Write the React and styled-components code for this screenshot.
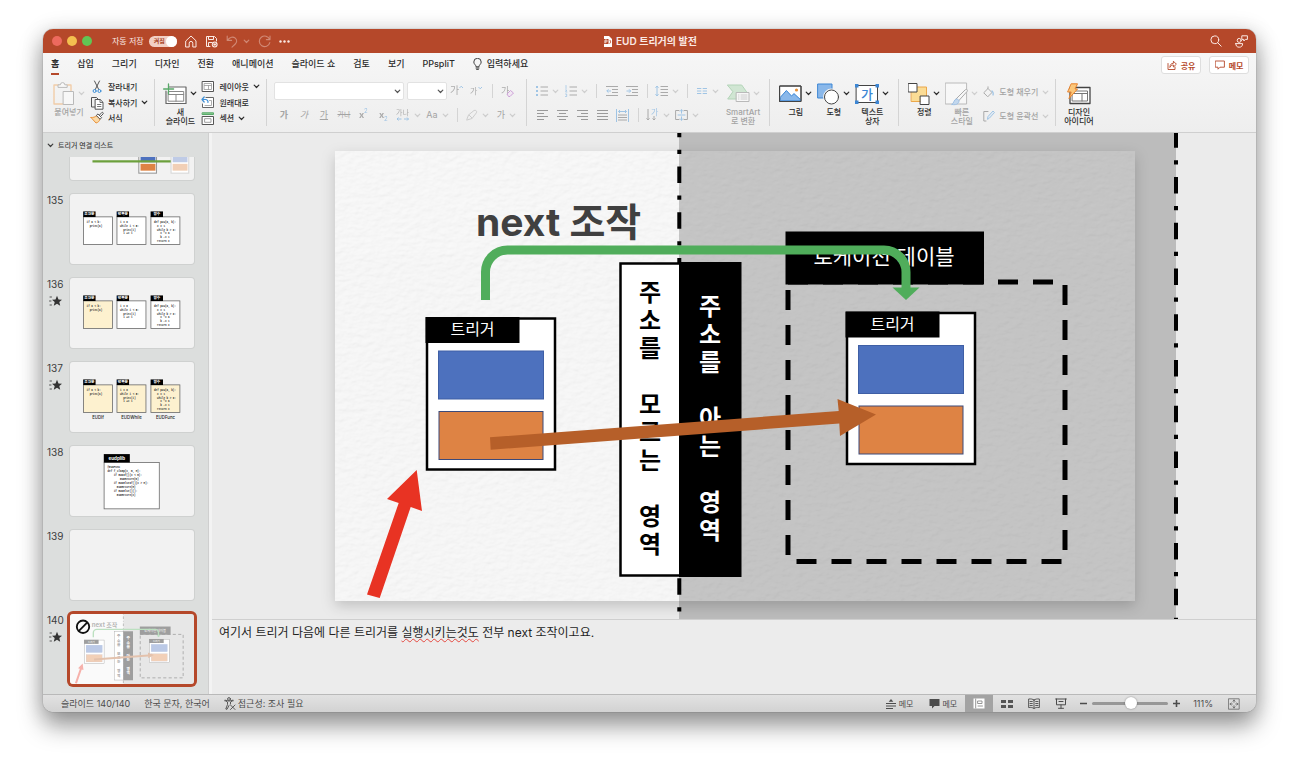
import React from "react";
import styled, { createGlobalStyle, css } from "styled-components";

const GlobalStyle = createGlobalStyle`
  * {
    box-sizing: border-box;
  }
  body {
    margin: 0;
    background: #fff;
    color: #2b2b2b;
    font-family: Inter, "Noto Sans CJK KR", sans-serif;
    font-size: 8px;
  }
  button, select, input {
    font: inherit;
    color: inherit;
    margin: 0;
  }
  svg {
    display: block;
    flex: none;
  }
`;

const Desktop = styled.div`
  height: 100vh;
  min-height: 600px;
  padding: 29px 43px 56px;
  overflow: hidden;
`;

const Window = styled.div`
  display: flex;
  flex-direction: column;
  height: 100%;
  border-radius: 10px;
  overflow: hidden;
  background: #ebebeb;
  box-shadow: 0 0 1px rgba(0, 0, 0, 0.6), 0 14px 24px rgba(0, 0, 0, 0.38),
    0 2px 22px rgba(0, 0, 0, 0.16);
`;

/* ---------- title bar ---------- */

const TitleBar = styled.header`
  flex: none;
  display: grid;
  grid-template-columns: 1fr auto 1fr;
  align-items: center;
  height: 24px;
  padding: 0 8px 0 9px;
  background: #b5482a;
  color: #fbeae5;
`;

const BarSide = styled.div`
  display: flex;
  align-items: center;
  gap: ${({ $gap }) => $gap}px;
  justify-content: ${({ $end }) => ($end ? "flex-end" : "flex-start")};
`;

const Lights = styled.div`
  display: flex;
  gap: 5px;
  margin-right: 12px;
`;

const Light = styled.button`
  width: 10px;
  height: 10px;
  padding: 0;
  border: 0;
  border-radius: 50%;
  background: ${({ $color }) => $color};
`;

const AutoSave = styled.label`
  display: flex;
  align-items: center;
  gap: 5px;
  line-height: 12px;

  input {
    position: absolute;
    opacity: 0;
  }
`;

const Track = styled.span`
  display: flex;
  align-items: center;
  justify-content: space-between;
  width: 28px;
  height: 11px;
  padding-left: 5px;
  border-radius: 6px;
  background: #f2d0c5;
  color: #a94427;
  font-size: 6px;
  font-weight: 700;

  &::after {
    content: "";
    width: 11px;
    height: 11px;
    border-radius: 50%;
    background: #fff;
  }
`;

const BarButton = styled.button`
  display: flex;
  align-items: center;
  gap: 5px;
  padding: 0;
  border: 0;
  background: none;
  opacity: ${({ disabled }) => (disabled ? 0.4 : 1)};
`;

const DocTitle = styled.h1`
  display: flex;
  align-items: center;
  gap: 4px;
  margin: 0;
  font-size: 10px;
  font-weight: 600;
  line-height: 12px;
`;

/* ---------- tabs ---------- */

const Head = styled.div`
  flex: none;
  background: linear-gradient(#f6f6f6, #eeeeee);
  border-bottom: 1px solid #cfcfcf;
`;

const TabRow = styled.div`
  display: flex;
  align-items: center;
  height: 24px;
  padding: 0 7px 0 8px;
`;

const Tabs = styled.nav`
  flex: 1;
  display: flex;
  gap: 18px;
  font-size: 9px;
  line-height: 14px;
`;

const Tab = styled.button`
  display: flex;
  align-items: center;
  gap: 5px;
  height: 20px;
  padding: 0;
  border: 0;
  border-bottom: 2px solid ${({ $active }) => ($active ? "#b5482a" : "transparent")};
  background: none;
  font-weight: ${({ $active }) => ($active ? 700 : 500)};
  white-space: nowrap;
`;

const Actions = styled.div`
  display: flex;
  gap: 8px;
`;

const ActionButton = styled.button`
  display: flex;
  align-items: center;
  justify-content: center;
  gap: 4px;
  width: 40px;
  height: 18px;
  padding: 0;
  border: 1px solid #dedede;
  border-radius: 3px;
  background: #fff;
  color: #b5482a;
  font-weight: 700;
`;

/* ---------- ribbon ---------- */

const Ribbon = styled.div`
  display: flex;
  height: 55px;
  padding: 2px 0 6px;
`;

const Group = styled.div`
  flex: none;
  display: flex;
  gap: ${({ $gap }) => $gap || 5}px;
  padding: 0 ${({ $right }) => $right}px 0 ${({ $left }) => $left}px;

  &:not(:last-child) {
    border-right: 1px solid #d4d4d4;
  }
`;

const disabledTool = css`
  &:disabled {
    color: #a3a3a3;
  }
  &:disabled svg {
    opacity: 0.45;
  }
`;

const BigTool = styled.button`
  display: flex;
  flex-direction: column;
  align-items: center;
  gap: 2px;
  padding: 2px 0 0;
  border: 0;
  background: none;
  line-height: 9px;
  white-space: pre-line;
  font-weight: 500;
  ${disabledTool}
`;

const BigIcon = styled.span`
  display: flex;
  align-items: center;
  gap: 3px;
  height: 25px;
`;

const SmallTool = styled.button`
  display: flex;
  align-items: center;
  gap: 4px;
  height: 16px;
  padding: 0;
  border: 0;
  background: none;
  line-height: 12px;
  font-weight: 500;
  ${disabledTool}
`;

const Stack = styled.div`
  display: flex;
  flex-direction: column;
  gap: ${({ $gap }) => $gap || 0}px;
  padding-top: ${({ $top }) => $top || 0}px;
`;

const ToolRow = styled.div`
  display: flex;
  align-items: center;
  height: 18px;
`;

const Tool = styled.button`
  display: flex;
  align-items: center;
  justify-content: center;
  gap: 4px;
  width: ${({ $drop }) => ($drop ? 29 : 20)}px;
  height: 18px;
  padding: 0;
  border: 0;
  background: none;
  font-size: 9px;
  line-height: 12px;
  white-space: nowrap;
  ${disabledTool}

  s {
    font-size: 7px;
  }
`;

const Rule = styled.span`
  width: 1px;
  height: 14px;
  margin: 0 5px;
  background: #d4d4d4;
`;

const SelectBox = styled.label`
  position: relative;
  width: ${({ $w }) => $w}px;
  height: 18px;
  margin-right: ${({ $after }) => $after}px;
  color: #555;

  select {
    width: 100%;
    height: 100%;
    appearance: none;
    border: 1px solid #e2e2e2;
    border-radius: 2px;
    background: #fff;
  }
  svg {
    position: absolute;
    right: 3px;
    top: 7px;
    pointer-events: none;
  }
`;

/* ---------- body ---------- */

const Main = styled.div`
  flex: 1;
  min-height: 0;
  display: flex;
`;

const Side = styled.aside`
  flex: none;
  display: flex;
  flex-direction: column;
  width: 169px;
  background: #dcdedd;
  border-right: 3px solid #f3f3f3;
  box-shadow: inset -1px 0 #cfcfcf;
`;

const SectionHead = styled.button`
  flex: none;
  display: flex;
  align-items: center;
  gap: 4px;
  height: 24px;
  padding: 0 4px;
  border: 0;
  background: none;
  color: #3d3d3d;
  font-size: 7px;
  font-weight: 500;
`;

const SlideList = styled.ol`
  flex: 1;
  min-height: 0;
  display: flex;
  flex-direction: column;
  justify-content: flex-end;
  gap: 14px;
  margin: 0;
  padding: 0 0 10px 4px;
  overflow: hidden;
  list-style: none;
`;

const SlideItem = styled.li`
  flex: none;
  display: grid;
  grid-template-columns: 23px 124px;
  height: 70px;
`;

const SlideNo = styled.div`
  font-size: 10px;
  line-height: 12px;
  color: #3d3d3d;

  svg {
    margin: 5px 0 0 2px;
  }
`;

const Thumb = styled.button`
  display: block;
  height: 70px;
  padding: 0;
  border: 0;
  border-radius: 3px;
  overflow: hidden;
  background: #f2f2f2;
  box-shadow: ${({ $active }) => ($active ? "0 0 0 3px #b5482a" : "0 0 0 1px #cfd1d0")};

  > svg {
    width: 100%;
    height: 100%;
  }
`;

const Work = styled.main`
  flex: 1;
  min-width: 0;
  display: flex;
  flex-direction: column;
`;

const Stage = styled.section`
  flex: 1;
  min-height: 0;
  display: flex;
  align-items: center;
  justify-content: center;
  padding-left: 2px;
  overflow: hidden;

  > svg {
    overflow: visible;
  }
`;

const Notes = styled.div`
  flex: none;
  height: 75px;
  padding: 4px 7px;
  border-top: 1px solid #cfcfcf;
  background: #ececec;
  color: #1f1f1f;
  font-size: 12px;
  line-height: 18px;
  outline: none;
`;

const Misspelled = styled.span`
  text-decoration: underline wavy #e5483f 1px;
  text-underline-offset: 1px;
`;

/* ---------- status bar ---------- */

const StatusBar = styled.footer`
  flex: none;
  display: flex;
  justify-content: space-between;
  height: 18px;
  border-top: 1px solid #b9b9b9;
  background: linear-gradient(#e2e2e2, #d2d2d2);
  color: #4c4c4c;
`;

const StatusPart = styled.div`
  display: flex;
  align-items: center;
  gap: ${({ $gap }) => $gap || 0}px;
  padding: 0 ${({ $right }) => $right || 0}px 0 ${({ $left }) => $left || 0}px;
`;

const StatusButton = styled.button`
  display: flex;
  align-items: center;
  justify-content: center;
  gap: 2px;
  min-width: ${({ $w }) => $w || 0}px;
  height: 17px;
  padding: 0;
  border: 0;
  background: ${({ $active }) => ($active ? "#a3a3a3" : "none")};
  line-height: 12px;
  font-size: ${({ $large }) => ($large ? 9 : 8)}px;
  white-space: nowrap;
`;

const Zoom = styled.input`
  width: 76px;
  height: 13px;
  appearance: none;
  background: none;

  &::-webkit-slider-runnable-track {
    height: 3px;
    border-radius: 2px;
    background: #979797;
  }
  &::-webkit-slider-thumb {
    appearance: none;
    width: 12px;
    height: 12px;
    margin-top: -5px;
    border-radius: 50%;
    background: #fff;
    box-shadow: 0 0 2px rgba(0, 0, 0, 0.4);
  }
`;

/* ---------- icons ---------- */

const Icon = ({ w = 14, h = 14, children, ...rest }) => (
  <svg
    width={w}
    height={h}
    viewBox={`0 0 ${w} ${h}`}
    fill="none"
    stroke="currentColor"
    strokeLinecap="round"
    strokeLinejoin="round"
    aria-hidden="true"
    {...rest}
  >
    {children}
  </svg>
);

const Chevron = () => (
  <Icon w={7} h={5} strokeWidth="1.2">
    <path d="M1.2 1.2 3.5 3.5 5.8 1.2" />
  </Icon>
);

const HomeIcon = () => (
  <Icon w={12} h={13}>
    <path d="M1 5.8 6 1l5 4.800V12H7.800V8.200a1.800 1.800 0 0 0-3.600 0V12H1z" />
  </Icon>
);

const SaveIcon = () => (
  <Icon w={13} h={13}>
    <path d="M5 11.5H1.5v-10h8l2 2V6M3.500 1.500v3h5v-3M3.500 11.500v-4H7" />
    <circle cx="9.7" cy="9.5" r="2.9" fill="#fbeae5" stroke="none" />
    <path d="M8.200 9.200a1.600 1.600 0 0 1 2.800-.5M11.200 9.900a1.600 1.600 0 0 1-2.800.5" stroke="#b5482a" strokeWidth=".8" />
  </Icon>
);

const UndoIcon = () => (
  <Icon w={12} h={13} strokeWidth="1.1">
    <path d="M1.200 1v4.400h4.400M1.400 5.200C4 2 7 1.200 9.300 3.200c2 2 1.600 4.200 0 5.800L6 12.200" />
  </Icon>
);

const RedoIcon = () => (
  <Icon w={13} h={13} strokeWidth="1.1">
    <path d="M12 1v3.600H8.400M11.600 4.400A5.300 5.300 0 1 0 11.800 7.600" />
  </Icon>
);

const DotsIcon = () => (
  <Icon w={11} h={3}>
    <g fill="currentColor" stroke="none">
      <circle cx="1.5" cy="1.5" r="1.2" />
      <circle cx="5.5" cy="1.5" r="1.2" />
      <circle cx="9.5" cy="1.5" r="1.2" />
    </g>
  </Icon>
);

const FileIcon = () => (
  <Icon w={9} h={11}>
    <path d="M1 0h5l3 3v8H1z" fill="#fff" stroke="none" />
    <path d="M0 3h5.500v5H0z" fill="#b5482a" stroke="none" />
    <path d="M2 7V4h1.200a1 1 0 0 1 0 2H2" stroke="#fff" strokeWidth=".8" />
    <path d="M7 4.200a2 2 0 0 1 0 3.200" stroke="#b5482a" strokeWidth=".9" />
  </Icon>
);

const SearchIcon = () => (
  <Icon w={12} h={12}>
    <circle cx="4.800" cy="4.800" r="3.900" />
    <path d="m7.700 7.700 3.500 3.500" />
  </Icon>
);

const PeopleIcon = () => (
  <Icon w={13} h={13}>
    <circle cx="4.200" cy="5.400" r="2" />
    <path d="M.8 8.600h6.800c0 2.400-1.200 3.600-3.400 3.600S.8 11 .8 8.600ZM7.200.8h5.200v3.600h-2L8.800 6V4.400H7.200z" />
  </Icon>
);

const BulbIcon = () => (
  <Icon w={9} h={12} strokeWidth=".9">
    <path d="M3 8.400C3 6.800.8 6.200.8 4a3.700 3.700 0 0 1 7.400 0c0 2.200-2.200 2.800-2.200 4.400zM3 10h3M3.600 11.400h1.800" />
  </Icon>
);

const ShareIcon = () => (
  <Icon w={10} h={10} strokeWidth=".9">
    <path d="M1 3.500v6h7V7M3 7c0-2.600 1.200-3.600 3.400-3.700V1.200l3 3-3 2.800V5C5 5 4 5.600 3 7Z" />
  </Icon>
);

const CommentIcon = () => (
  <Icon w={10} h={10} strokeWidth=".9">
    <path d="M.6 1h8.800v6.200H5L3 9.200v-2H.6z" />
  </Icon>
);

const PasteIcon = () => (
  <Icon w={22} h={24}>
    <path d="M6 3H1v19h9M14 3h4v6" stroke="#f0a050" strokeWidth="1.400" />
    <path d="M5 5V2.800h2.400a2.200 2.200 0 0 1 4.400 0h2.400V5z" fill="#fff" stroke="#777" />
    <path d="M10.500 9.500h10v13h-10z" fill="#fff" stroke="#777" />
  </Icon>
);

const CutIcon = () => (
  <Icon>
    <path d="M4.500 1 8.800 9.600M9.500 1 5.200 9.600" stroke="#555" />
    <circle cx="4.600" cy="11" r="1.500" stroke="#3f8fd6" />
    <circle cx="9.400" cy="11" r="1.500" stroke="#3f8fd6" />
  </Icon>
);

const CopyIcon = () => (
  <Icon stroke="#555">
    <path d="M5 11H1.500V1.500h5L8 3" />
    <path d="M5.500 3.500h4.700L13 6.300v6.900H5.500z" fill="#fff" />
    <path d="M10 3.800v2.700h2.700M7.500 8.500h3.400M7.500 10.500h3.400" strokeWidth=".8" />
  </Icon>
);

const BrushIcon = () => (
  <Icon>
    <path d="m1 6.500 5 5.500c2-.4 3.600-2 4-4L7 4.600C5 6 3.500 6.600 1 6.500Z" fill="#fbd9a6" stroke="#e8923a" />
    <path d="M6.600 4.200 8 2.900l3.600 3.800L10.300 8zM9.600 4l2.200-2.500c.8-.6 2 .5 1.300 1.400l-2.300 2.300" fill="#fff" stroke="#555" />
  </Icon>
);

const NewSlideIcon = () => (
  <Icon w={24} h={22}>
    <path d="M6 4h17v16.500H3V8" fill="#fff" stroke="#666" strokeWidth="1.200" />
    <path d="M5.500 8.500h15.200v9.700H5.500zM5.500 11.500h15.200M13 11.500v6.700" stroke="#888" />
    <path d="M5.500 1v10M.6 6h10" stroke="#58a968" strokeWidth="1.300" />
  </Icon>
);

const LayoutIcon = () => (
  <Icon h={13}>
    <path d="M1.500 1.500h11v10h-11z" stroke="#555" fill="#fff" />
    <path d="M3.500 3.500h7v6h-7zM3.500 5.500h7M7.500 5.500v4" stroke="#999" strokeWidth=".8" />
  </Icon>
);

const ResetIcon = () => (
  <Icon h={13}>
    <path d="M5 1.500h7.500v10h-11V8" stroke="#666" fill="#fff" />
    <path d="M4 9.500h6.500v-5h-2" stroke="#999" strokeWidth=".8" />
    <path d="M3.200 1 1 3.500 3.200 6M1 3.500h3.500a2.500 2.500 0 0 1 2.500 3" stroke="#3f8fd6" strokeWidth="1.200" />
  </Icon>
);

const SectionIcon = () => (
  <Icon h={13}>
    <path d="M1.500.8h11v1.700h-11z" fill="#8ccf95" stroke="#58a968" />
    <path d="M1.500 4.500h11v8h-11z" fill="#fff" stroke="#555" />
    <path d="M4 6.700h6v3.600H4z" stroke="#888" strokeWidth=".8" />
  </Icon>
);

// A glyph with a small mark beside or under it
const GlyphIcon = ({ text, w = 14, size = 9, children, ...rest }) => (
  <svg width={w} height="14" viewBox={`0 0 ${w} 14`} aria-hidden="true" fill="none">
    <text x="0" y="10" fontSize={size} fill="#555" {...rest}>
      {text}
    </text>
    {children}
  </svg>
);

const EraserGlyph = () => (
  <GlyphIcon text="가">
    <path d="m6 10 3.500-3.500 3 2.500L9 12.500H7.500z" fill="#f0dcf2" stroke="#a040b8" />
  </GlyphIcon>
);

const PenIcon = () => (
  <Icon w={12} h={12}>
    <path d="m1 10 1.500-4L8 1.500c1.500-1 3.400.8 2.400 2.300L6 9.500 1 11zM3 6l3 3" />
  </Icon>
);

const ListIcon = ({ numbered }) => (
  <Icon w={12} h={12}>
    <path d="M4.500 2H12M4.500 6H12M4.500 10H12" strokeLinecap="butt" stroke="#555" />
    {numbered ? (
      <path d="M1 .5v3M.5 5h1.300L.6 7h1.300M.5 9h1.200v2.500H.5" stroke="#3f8fd6" strokeWidth=".8" />
    ) : (
      <path d="M0 1h2v2H0zM0 5h2v2H0zM0 9h2v2H0z" fill="#3f8fd6" stroke="none" />
    )}
  </Icon>
);

const IndentIcon = ({ out }) => (
  <Icon w={12} h={12} strokeLinecap="butt" stroke="#555">
    <path d="M0 1.500h12M6 4.500h6M6 7.500h6M0 10.500h12" />
    <path d={out ? "M5 6H.8M2.500 4.300.8 6l1.700 1.700" : "M.5 6h4.200M3 4.300 4.700 6 3 7.700"} stroke="#3f8fd6" />
  </Icon>
);

const SpacingIcon = () => (
  <Icon w={13} h={12} strokeLinecap="butt" stroke="#555">
    <path d="M5.500 1.500H13M5.500 4.500H13M5.500 7.500H13M5.500 10.500H13" />
    <path d="M2 1v10M.5 2.800 2 1l1.500 1.800M.5 9.200 2 11l1.500-1.800" stroke="#3f8fd6" />
  </Icon>
);

const ColumnsIcon = () => (
  <Icon w={12} h={12} strokeLinecap="butt" stroke="#3f8fd6">
    <path d="M1 3.500h4.300M6.700 3.500H11M1 6h4.300M6.700 6H11M1 8.500h4.300M6.700 8.500H11" />
  </Icon>
);

const alignPaths = {
  left: "M0 1.5h11M0 4.500h7M0 7.500h11M0 10.500h7",
  center: "M0 1.5h11M2 4.500h7M0 7.500h11M2 10.500h7",
  right: "M0 1.5h11M4 4.500h7M0 7.500h11M4 10.500h7",
  justify: "M0 1.5h11M0 4.500h11M0 7.500h11M0 10.500h11",
};

const AlignIcon = ({ kind }) => (
  <Icon w={11} h={12} strokeLinecap="butt" stroke="#333">
    <path d={alignPaths[kind]} />
  </Icon>
);

const DistributeIcon = () => (
  <Icon w={13} h={13} strokeLinecap="butt" stroke="#555">
    <path d="M2 6h9M2 8.500h9M2 11h9" />
    <path d="M.5 0v13M12.500 0v13M2.500 2.500h8M4 1 2.500 2.500 4 4M9 1l1.500 1.500L9 4" stroke="#3f8fd6" />
  </Icon>
);

const DirectionIcon = () => (
  <GlyphIcon text="가" size={8} w={13} x="5" y="7" style={{ fill: "#3f8fd6" }}>
    <path d="M2 1v11M.5 10.300 2 12l1.500-1.700M8 8v4M6.500 10.500 8 12l1.500-1.500" stroke="#555" />
  </GlyphIcon>
);

const AnchorIcon = () => (
  <Icon w={13} h={12}>
    <path d="M4 1.500H.6v9H4M9 1.500h3.400v9H9" stroke="#555" />
    <path d="M3 6h7M6.500.8v3.400M5.200 2.200 6.500.8l1.300 1.400M6.500 11.200V7.800M5.200 9.800l1.300 1.400 1.300-1.400" stroke="#3f8fd6" />
  </Icon>
);

const SmartArtIcon = () => (
  <Icon w={23} h={19}>
    <path d="M.7 1h14l5 7-5 7h-14l5-7z" fill="#a9d8ae" stroke="#68b073" />
    <path d="M9.500 8.500h12.500v9H9.500z" fill="#fff" stroke="#777" />
    <path d="M11.500 11h.5M11.500 13h.5M11.500 15h.5M14 11h6M14 13h6M14 15h6" stroke="#888" strokeWidth=".8" />
  </Icon>
);

const PictureIcon = () => (
  <Icon w={23} h={18}>
    <path d="M1 1h21v15.500H1z" fill="#fff" />
    <path d="m1.600 12 5.800-6.500 5.100 5.500 2.500-2.400 6.400 5.900v1.400H1.600z" fill="#8ab8ea" stroke="#3c86d4" />
    <circle cx="17.500" cy="5" r="1.600" fill="#e8923a" stroke="none" />
    <path d="M1 1h21v15.500H1z" stroke="#444" />
  </Icon>
);

const ShapesIcon = () => (
  <Icon w={23} h={22}>
    <path d="M1 1h14v14H1z" fill="#8ab8ea" stroke="#3c86d4" />
    <circle cx="14.500" cy="14" r="8.400" stroke="none" fill="#f3f3f3" />
    <circle cx="14.500" cy="14" r="7" fill="#fff" stroke="#444" />
  </Icon>
);

const TextBoxIcon = () => (
  <Icon w={24} h={20}>
    <path d="M1.500 1.500h21v17h-21z" fill="#fff" stroke="#444" />
    <text x="12" y="15" textAnchor="middle" fontSize="13" fontWeight="500" fill="#3c86d4" stroke="none">
      가
    </text>
    <path d="M0 0h3.500v3.500H0zM20.500 0H24v3.500h-3.500zM0 16.500h3.500V20H0zM20.500 16.500H24V20h-3.500z" fill="#3c86d4" stroke="none" />
  </Icon>
);

const ArrangeIcon = () => (
  <Icon w={22} h={22}>
    <path d="M3.500 4h15v14.500h-15z" fill="#fbdc95" stroke="#eba74a" />
    <path d="M.5.5h8.500V9H.5zM12.500 13H21v8.500h-8.500z" fill="#fff" stroke="#444" />
  </Icon>
);

const QuickStyleIcon = () => (
  <Icon w={23} h={24}>
    <path d="M.6 1h21v21H.6z" fill="#fff" stroke="#777" />
    <path d="m11 17 9-9c2-1.500 3 .2 2 1.500l-8.500 9.500z" fill="#fff" stroke="#555" />
    <path d="M7 22.500c2-.5 1.500-5 4.500-5.500 2.600 0 3.200 2.600 1.600 4.300-1.500 1.500-4 1.700-6.100 1.200Z" fill="#8ab8ea" stroke="#3c86d4" />
  </Icon>
);

const FillIcon = () => (
  <Icon w={12} h={12}>
    <path d="m1 6.500 4-4 4 4-4 4zM5 2.500V.8" stroke="#555" />
    <path d="M9 5c1.500 1.500 1.500 2.500 1 4" stroke="#3f8fd6" strokeWidth="1.300" />
  </Icon>
);

const OutlineIcon = () => (
  <Icon w={12} h={12}>
    <path d="M5 1.500H.8V11H3" stroke="#555" />
    <path d="m4.500 9 .5-2.500L10 1l1.500 1.500-5 5.500z" fill="#d3e6f8" stroke="#3f8fd6" />
  </Icon>
);

const DesignIcon = () => (
  <Icon w={24} h={22}>
    <path d="M3 4.500h20v16H3z" fill="#fff" stroke="#444" strokeWidth="1.300" />
    <path d="M5.500 8h15v10h-15zM5.500 10.500h15M15 10.500V18" stroke="#777" />
    <path d="M4.500.8h6L8 6h2.500L2 15.500 4.200 9H1z" fill="#fbc77a" stroke="#e8812a" />
  </Icon>
);

const StarIcon = () => (
  <Icon w={13} h={12}>
    <path d="M8 .8 9.500 4.400l3.500.3-2.700 2.400.9 3.700L8 8.800l-3.200 2 .9-3.700L3 4.700l3.500-.3z" fill="#333" stroke="none" />
    <path d="M1 2h1.500M.5 6H2M1 10h1.500" stroke="#555" />
  </Icon>
);

const AccessIcon = () => (
  <Icon w={12} h={13} strokeWidth=".9">
    <circle cx="5" cy="2" r="1.400" />
    <path d="M.8 3.500 3.500 5v2.500L1.800 12 3 12.300 5 8.500M9.200 3.500 6.500 5v2M.8 3.500c.5-.8 1 0 4.200.6 3-.6 3.700-1.400 4.200-.6M6.500 8l4.500 4.500M11 8l-4.500 4.500" />
  </Icon>
);

const NotesIcon = () => (
  <Icon w={12} h={12} strokeLinecap="butt">
    <path d="M1 5.500h10M1 8h10M1 10.500h7" />
    <path d="m6 1 2.300 2.800H3.700z" fill="currentColor" stroke="none" />
  </Icon>
);

const BubbleIcon = () => (
  <Icon w={11} h={11}>
    <path d="M.5 1h10v7H5.500L3 10.500V8H.5z" fill="currentColor" stroke="none" />
  </Icon>
);

const NormalViewIcon = () => (
  <Icon w={12} h={11} stroke="#fff">
    <path d="M.5.5h11v10H.5z" fill="#fff" stroke="none" />
    <path d="M2.700 1v9M5 3h4v2.500H5zM5 8h4.500" stroke="#8a8a8a" strokeWidth=".9" />
  </Icon>
);

const SorterIcon = () => (
  <Icon w={12} h={10}>
    <path d="M0 1h5v3H0zM7 1h5v3H7zM0 6h5v3H0zM7 6h5v3H7z" fill="#555" stroke="none" />
  </Icon>
);

const ReadingIcon = () => (
  <Icon w={12} h={11} strokeWidth=".9">
    <path d="M6 2C4.500 1 3 .8.6 1v8.500c2.400-.2 4 0 5.400 1 1.400-1 3-1.200 5.400-1V1C9 .8 7.500 1 6 2Zm0 0v8.500M2 3.500h2.300M2 5.500h2.300M2 7.500h2.300M7.700 3.500H10M7.700 5.500H10M7.700 7.500H10" />
  </Icon>
);

const ShowIcon = () => (
  <Icon w={12} h={11}>
    <path d="M.6 1h10.800M1.500 1v5.800h9V1M4 3.500h4M6 7v3M3.500 10.300h5" />
  </Icon>
);

const FitIcon = () => (
  <Icon w={12} h={12} strokeWidth=".8" stroke="#666">
    <path d="M.8.8h10.400v10.400H.8zM6 2v2.300M5 3.200 6 2l1 1.200M6 10V7.700M5 8.800 6 10l1-1.200M2 6h2.300M3.200 5 2 6l1.200 1M10 6H7.700M8.800 5 10 6 8.800 7" />
  </Icon>
);

const MinusIcon = () => (
  <Icon w={7} h={7} strokeWidth="1.600" strokeLinecap="butt">
    <path d="M0 3.500h7" />
  </Icon>
);

const PlusIcon = () => (
  <Icon w={7} h={7} strokeWidth="1.600" strokeLinecap="butt">
    <path d="M0 3.500h7M3.500 0v7" />
  </Icon>
);

/* ---------- slide drawings (800 x 450 units) ---------- */

const Paper = () => (
  <>
    <rect width="800" height="450" fill="#f7f7f7" />
    <rect width="800" height="450" filter="url(#paper)" opacity="0.24" />
  </>
);

const PaperFilter = () => (
  <defs>
    <filter id="paper" x="0" y="0" width="100%" height="100%">
      <feTurbulence type="fractalNoise" baseFrequency="0.12 0.2" numOctaves="4" seed="4" />
      <feDiffuseLighting lightingColor="#fff" surfaceScale="0.9">
        <feDistantLight azimuth="60" elevation="62" />
      </feDiffuseLighting>
    </filter>
    <filter id="slideShadow" x="-10%" y="-10%" width="120%" height="125%">
      <feDropShadow dx="0" dy="5" stdDeviation="7" floodOpacity="0.18" />
    </filter>
  </defs>
);

const TriggerCard = ({ x, y }) => (
  <g transform={`translate(${x} ${y})`}>
    <rect x="1.500" y="1.500" width="128" height="151" fill="#fff" stroke="#000" strokeWidth="2.500" />
    <rect width="94" height="26" />
    <text x="47" y="18" textAnchor="middle" fontSize="16" fill="#fff">
      트리거
    </text>
    <rect x="13" y="34" width="105" height="48" fill="#4d71be" stroke="#3f5fa5" />
    <rect x="13.500" y="94.500" width="104" height="48" fill="#de8344" stroke="#3c4a7a" />
  </g>
);

const VerticalText = ({ x, y, text, fill }) => (
  <text textAnchor="middle" fontSize="24" fontWeight="700" fill={fill}>
    {[...text].map((ch, i) =>
      ch === " " ? null : (
        <tspan key={i} x={x} y={y + i * 28}>
          {ch}
        </tspan>
      )
    )}
  </text>
);

const NextSlide = () => (
  <>
    <rect x="344" y="-18" width="497" height="486" fillOpacity="0.2" />
    <g stroke="#000" strokeWidth="4" strokeDasharray="16.5 12.5 4.25 12.5">
      <path d="M344.300-30.300V461" />
      <path d="M841-19.700V468" />
    </g>
    <rect x="453" y="131" width="277" height="279.500" fill="none" stroke="#000" strokeWidth="5" strokeDasharray="20 15" />
    <text x="141" y="85" fontSize="39" fontWeight="700" fill="#404040">
      next 조작
    </text>
    <rect x="450.500" y="80.500" width="198.500" height="53" />
    <text x="549" y="113" textAnchor="middle" fontSize="21" fill="#fff">
      로케이션 테이블
    </text>
    <rect x="285.500" y="112.500" width="60" height="312" fill="#fff" stroke="#000" strokeWidth="2.500" />
    <rect x="344" y="111" width="62.500" height="315" />
    <VerticalText x={315} y={150} text="주소를 모르는 영역" fill="#000" />
    <VerticalText x={375} y={164} text="주소를 아는 영역" fill="#fff" />
    <TriggerCard x={90.5} y={166} />
    <TriggerCard x={510.5} y={160.5} />
    <path d="M150.500 149V121a22 22 0 0 1 22-22H549a22 22 0 0 1 22 22v17" fill="none" stroke="#50ad5b" strokeWidth="9" />
    <path d="M557.500 136.500h27L571 149z" fill="#50ad5b" />
    <path d="m155 286.300 348.700-26.300-1.200-12L541 263.500 505 285l-.7-12.500L155.700 298.700z" fill="#b65f29" />
    <path d="m81.700 319 5.300 41-11.300-4L44.700 447 32 443.500 63.700 352 52 348z" fill="#e83323" />
  </>
);

const codeCards = [
  { x: 87, title: "조건문", name: "EUDIf", code: ["if a < b:", "  print(a)"] },
  { x: 303, title: "반복문", name: "EUDWhile", code: ["i = 0", "while i < 5:", "  print(i)", "  i += 1"] },
  {
    x: 522,
    title: "함수",
    name: "EUDFunc",
    code: ["def pow(a, b):", "  x = 1", "  while b > 0:", "    x *= a", "    b -= 1", "  return x"],
  },
];

const clampCode = [
  "@EUDFunc",
  "def f_clamp(x, m, M):",
  "    if EUDIf()(x < m):",
  "        EUDReturn(m)",
  "    if EUDElseIf()(x > M):",
  "      EUDReturn(M)",
  "    if EUDElse()():",
  "      EUDReturn(x)",
];

const CodeLines = ({ x, y, lines }) => (
  <text fontSize="17" fontWeight="700" fontFamily="Liberation Mono, monospace" fill="#333">
    {lines.map((line, i) => (
      <tspan key={i} x={x + (line.length - line.trimStart().length) * 10} y={y + i * 25}>
        {line.trimStart()}
      </tspan>
    ))}
  </text>
);

const CodeSlide = ({ filled, named }) => (
  <>
    {codeCards.map((card, i) => (
      <g key={card.title}>
        <rect x={card.x} y="147" width="187" height="177" fill={i < filled ? "#fdf1cf" : "#fff"} stroke="#666" strokeWidth="5" />
        <rect x={card.x - 2} y="112" width="80" height="36" />
        <text x={card.x + 38} y="138" textAnchor="middle" fontSize="24" fontWeight="700" fill="#fff">
          {card.title}
        </text>
        <CodeLines x={card.x + 20} y={185} lines={card.code} />
        {named && (
          <text x={card.x + 94} y="368" textAnchor="middle" fontSize="28" fontWeight="500" fill="#222">
            {card.name}
          </text>
        )}
      </g>
    ))}
  </>
);

const ClampSlide = () => (
  <>
    <rect x="220" y="106" width="356" height="298" fill="#fff" stroke="#666" strokeWidth="5" />
    <rect x="218" y="52" width="168" height="54" />
    <text x="302" y="88" textAnchor="middle" fontSize="29" fontWeight="700" fill="#fff">
      eudplib
    </text>
    <CodeLines x={242} y={144} lines={clampCode} />
  </>
);

const LinkSlide = () => (
  <>
    <rect x="444" y="250" width="114" height="156" fill="#fff" stroke="#999" strokeWidth="7" />
    <rect x="455" y="290" width="96" height="46" fill="#4d71be" />
    <rect x="455" y="346" width="96" height="44" fill="#de8344" />
    <rect x="652" y="250" width="114" height="156" fill="#fff" stroke="#d8d8d8" strokeWidth="7" />
    <rect x="662" y="290" width="96" height="46" fill="#bfcbe6" />
    <rect x="662" y="346" width="96" height="44" fill="#f1cfb6" />
    <path d="M145 330h505" stroke="#6ca03c" strokeWidth="15" />
  </>
);

const HiddenMark = () => (
  <g fill="none" stroke="#111" strokeWidth="12">
    <circle cx="84" cy="82" r="40" />
    <path d="m56 110 56-56" />
  </g>
);

// The first entry is scrolled past its number, so it carries no label
const slides = [
  { no: 134, scrolled: true, art: <LinkSlide /> },
  { no: 135, art: <CodeSlide filled={0} /> },
  { no: 136, art: <CodeSlide filled={1} />, animated: true },
  { no: 137, art: <CodeSlide filled={3} named />, animated: true },
  { no: 138, art: <ClampSlide /> },
  { no: 139, art: null },
  {
    no: 140,
    animated: true,
    active: true,
    art: (
      <>
        <NextSlide />
        <rect width="800" height="450" fill="#fff" opacity="0.62" />
        <HiddenMark />
      </>
    ),
  },
];

const tabs = ["홈", "삽입", "그리기", "디자인", "전환", "애니메이션", "슬라이드 쇼", "검토", "보기", "PPspliT"];

const Big = ({ icon, label, drop = true, disabled }) => (
  <BigTool disabled={disabled}>
    <BigIcon>
      {icon}
      {drop && <Chevron />}
    </BigIcon>
    {label}
  </BigTool>
);

const Small = ({ icon, label, drop, disabled }) => (
  <SmallTool disabled={disabled}>
    {icon}
    {label}
    {drop && <Chevron />}
  </SmallTool>
);

const Drop = ({ label, children }) => (
  <Tool $drop disabled aria-label={label}>
    {children}
    <Chevron />
  </Tool>
);

const RibbonBar = () => (
  <Ribbon>
    <Group $left={10} $right={6}>
      <Big icon={<PasteIcon />} label="붙여넣기" disabled />
      <Stack>
        <Small icon={<CutIcon />} label="잘라내기" />
        <Small icon={<CopyIcon />} label="복사하기" drop />
        <Small icon={<BrushIcon />} label="서식" />
      </Stack>
    </Group>
    <Group $left={8} $right={6} $gap={4}>
      <Big icon={<NewSlideIcon />} label={"새\n슬라이드"} />
      <Stack>
        <Small icon={<LayoutIcon />} label="레이아웃" drop />
        <Small icon={<ResetIcon />} label="원래대로" />
        <Small icon={<SectionIcon />} label="섹션" drop />
      </Stack>
    </Group>
    <Group $left={7} $right={5}>
      <Stack $top={3} $gap={6}>
        <ToolRow>
          <SelectBox $w={130} $after={3}>
            <select aria-label="글꼴" />
            <Chevron />
          </SelectBox>
          <SelectBox $w={40} $after={0}>
            <select aria-label="글꼴 크기" />
            <Chevron />
          </SelectBox>
          <Tool disabled aria-label="글꼴 크게">
            <GlyphIcon text="가" size={10}>
              <path d="m9.500 4 1.700-1.800L13 4" stroke="#3f8fd6" />
            </GlyphIcon>
          </Tool>
          <Tool disabled aria-label="글꼴 작게">
            <GlyphIcon text="가" size={8}>
              <path d="m8.500 3 1.700 1.800L12 3" stroke="#3f8fd6" />
            </GlyphIcon>
          </Tool>
          <Rule />
          <Tool disabled aria-label="서식 지우기">
            <EraserGlyph />
          </Tool>
        </ToolRow>
        <ToolRow>
          <Tool disabled>
            <b>가</b>
          </Tool>
          <Tool disabled>
            <i>가</i>
          </Tool>
          <Tool disabled>
            <u>가</u>
          </Tool>
          <Tool disabled>
            <s>가나</s>
          </Tool>
          <Tool disabled aria-label="위 첨자">
            <GlyphIcon text="x" w={9} fontWeight="700">
              <text x="5" y="5" fontSize="6" fill="#3f8fd6">
                2
              </text>
            </GlyphIcon>
          </Tool>
          <Tool disabled aria-label="아래 첨자">
            <GlyphIcon text="x" w={9} fontWeight="700">
              <text x="5" y="13" fontSize="6" fill="#3f8fd6">
                2
              </text>
            </GlyphIcon>
          </Tool>
          <Drop label="문자 간격">
            <GlyphIcon text="가나" size={7} y="7">
              <path d="M1 11h4.500M2.500 9.500 1 11l1.500 1.500M8 11h4.500M11 9.500l1.500 1.500-1.500 1.500" stroke="#3f8fd6" />
            </GlyphIcon>
          </Drop>
          <Drop>Aa</Drop>
          <Rule />
          <Drop label="강조색">
            <PenIcon />
          </Drop>
          <Drop>가</Drop>
        </ToolRow>
      </Stack>
    </Group>
    <Group $left={6} $right={9} $gap={4}>
      <Stack $top={3} $gap={6}>
        <ToolRow>
          <Drop label="글머리 기호">
            <ListIcon />
          </Drop>
          <Drop label="번호 매기기">
            <ListIcon numbered />
          </Drop>
          <Rule />
          <Tool disabled aria-label="내어쓰기">
            <IndentIcon out />
          </Tool>
          <Tool disabled aria-label="들여쓰기">
            <IndentIcon />
          </Tool>
          <Rule />
          <Drop label="줄 간격">
            <SpacingIcon />
          </Drop>
          <Rule />
          <Drop label="열">
            <ColumnsIcon />
          </Drop>
        </ToolRow>
        <ToolRow>
          {Object.keys(alignPaths).map((kind) => (
            <Tool key={kind} disabled aria-label={kind}>
              <AlignIcon kind={kind} />
            </Tool>
          ))}
          <Tool disabled aria-label="균등 분할">
            <DistributeIcon />
          </Tool>
          <Rule />
          <Drop label="텍스트 방향">
            <DirectionIcon />
          </Drop>
          <Drop label="텍스트 맞춤">
            <AnchorIcon />
          </Drop>
        </ToolRow>
      </Stack>
      <Big icon={<SmartArtIcon />} label={"SmartArt\n로 변환"} disabled />
    </Group>
    <Group $left={9} $right={9}>
      <Big icon={<PictureIcon />} label="그림" />
      <Big icon={<ShapesIcon />} label="도형" />
      <Big icon={<TextBoxIcon />} label={"텍스트\n상자"} />
    </Group>
    <Group $left={9} $right={6}>
      <Big icon={<ArrangeIcon />} label="정렬" />
      <Big icon={<QuickStyleIcon />} label={"빠른\n스타일"} disabled />
      <Stack $top={5} $gap={8}>
        <Small icon={<FillIcon />} label="도형 채우기" drop disabled />
        <Small icon={<OutlineIcon />} label="도형 윤곽선" drop disabled />
      </Stack>
    </Group>
    <Group $left={8} $right={0}>
      <Big icon={<DesignIcon />} label={"디자인\n아이디어"} drop={false} />
    </Group>
  </Ribbon>
);

const App = () => {
  return (
    <Desktop>
      <GlobalStyle />
      <Window>
        <TitleBar>
          <BarSide $gap={8}>
            <Lights>
              <Light $color="#ed6a5e" aria-label="닫기" />
              <Light $color="#f4bf4f" aria-label="최소화" />
              <Light $color="#61c554" aria-label="확대" />
            </Lights>
            <AutoSave>
              자동 저장
              <input type="checkbox" defaultChecked />
              <Track>켜짐</Track>
            </AutoSave>
            <BarButton aria-label="홈">
              <HomeIcon />
            </BarButton>
            <BarButton aria-label="저장">
              <SaveIcon />
            </BarButton>
            <BarButton disabled aria-label="실행 취소">
              <UndoIcon />
              <Chevron />
            </BarButton>
            <BarButton disabled aria-label="다시 실행">
              <RedoIcon />
            </BarButton>
            <BarButton aria-label="더 보기">
              <DotsIcon />
            </BarButton>
          </BarSide>
          <DocTitle>
            <FileIcon />
            EUD 트리거의 발전
          </DocTitle>
          <BarSide $gap={13} $end>
            <BarButton aria-label="검색">
              <SearchIcon />
            </BarButton>
            <BarButton aria-label="공동 작업">
              <PeopleIcon />
            </BarButton>
          </BarSide>
        </TitleBar>

        <Head>
          <TabRow>
            <Tabs>
              {tabs.map((tab) => (
                <Tab key={tab} $active={tab === "홈"}>
                  {tab}
                </Tab>
              ))}
              <Tab>
                <BulbIcon />
                입력하세요
              </Tab>
            </Tabs>
            <Actions>
              <ActionButton>
                <ShareIcon />
                공유
              </ActionButton>
              <ActionButton>
                <CommentIcon />
                메모
              </ActionButton>
            </Actions>
          </TabRow>
          <RibbonBar />
        </Head>

        <Main>
          <Side>
            <SectionHead>
              <Chevron />
              트리거 연결 리스트
            </SectionHead>
            <SlideList>
              {slides.map((slide) => (
                <SlideItem key={slide.no}>
                  <SlideNo>
                    {!slide.scrolled && slide.no}
                    {slide.animated && <StarIcon />}
                  </SlideNo>
                  <Thumb $active={slide.active} aria-label={`슬라이드 ${slide.no}`}>
                    <svg viewBox="0 0 800 450" preserveAspectRatio="none">
                      {slide.art}
                    </svg>
                  </Thumb>
                </SlideItem>
              ))}
            </SlideList>
          </Side>

          <Work>
            <Stage>
              <svg width="800" height="450" viewBox="0 0 800 450">
                <PaperFilter />
                <rect width="800" height="450" fill="#f2f2f2" filter="url(#slideShadow)" />
                <Paper />
                <NextSlide />
              </svg>
            </Stage>
            <Notes role="textbox" aria-label="슬라이드 노트" contentEditable suppressContentEditableWarning spellCheck={false}>
              여기서 트리거 다음에 다른 트리거를 <Misspelled>실행시키는것도</Misspelled> 전부 next 조작이고요.
            </Notes>
          </Work>
        </Main>

        <StatusBar>
          <StatusPart $left={18} $gap={14}>
            <StatusButton $large>슬라이드 140/140</StatusButton>
            <StatusButton $large>한국 문자, 한국어</StatusButton>
            <StatusButton $large>
              <AccessIcon />
              접근성: 조사 필요
            </StatusButton>
          </StatusPart>
          <StatusPart $right={16}>
            <StatusPart $gap={16} $right={8}>
              <StatusButton>
                <NotesIcon />
                메모
              </StatusButton>
              <StatusButton>
                <BubbleIcon />
                메모
              </StatusButton>
            </StatusPart>
            <StatusButton $w={28} $active aria-label="기본">
              <NormalViewIcon />
            </StatusButton>
            <StatusButton $w={27} aria-label="여러 슬라이드">
              <SorterIcon />
            </StatusButton>
            <StatusButton $w={27} aria-label="읽기용 보기">
              <ReadingIcon />
            </StatusButton>
            <StatusButton $w={27} aria-label="슬라이드 쇼">
              <ShowIcon />
            </StatusButton>
            <StatusPart $gap={5} $left={6} $right={13}>
              <StatusButton aria-label="축소">
                <MinusIcon />
              </StatusButton>
              <Zoom type="range" aria-label="확대/축소" defaultValue={51} />
              <StatusButton aria-label="확대">
                <PlusIcon />
              </StatusButton>
            </StatusPart>
            <StatusPart $gap={15}>
              <StatusButton $large>111%</StatusButton>
              <StatusButton aria-label="창에 맞춤">
                <FitIcon />
              </StatusButton>
            </StatusPart>
          </StatusPart>
        </StatusBar>
      </Window>
    </Desktop>
  );
};

export default App;
